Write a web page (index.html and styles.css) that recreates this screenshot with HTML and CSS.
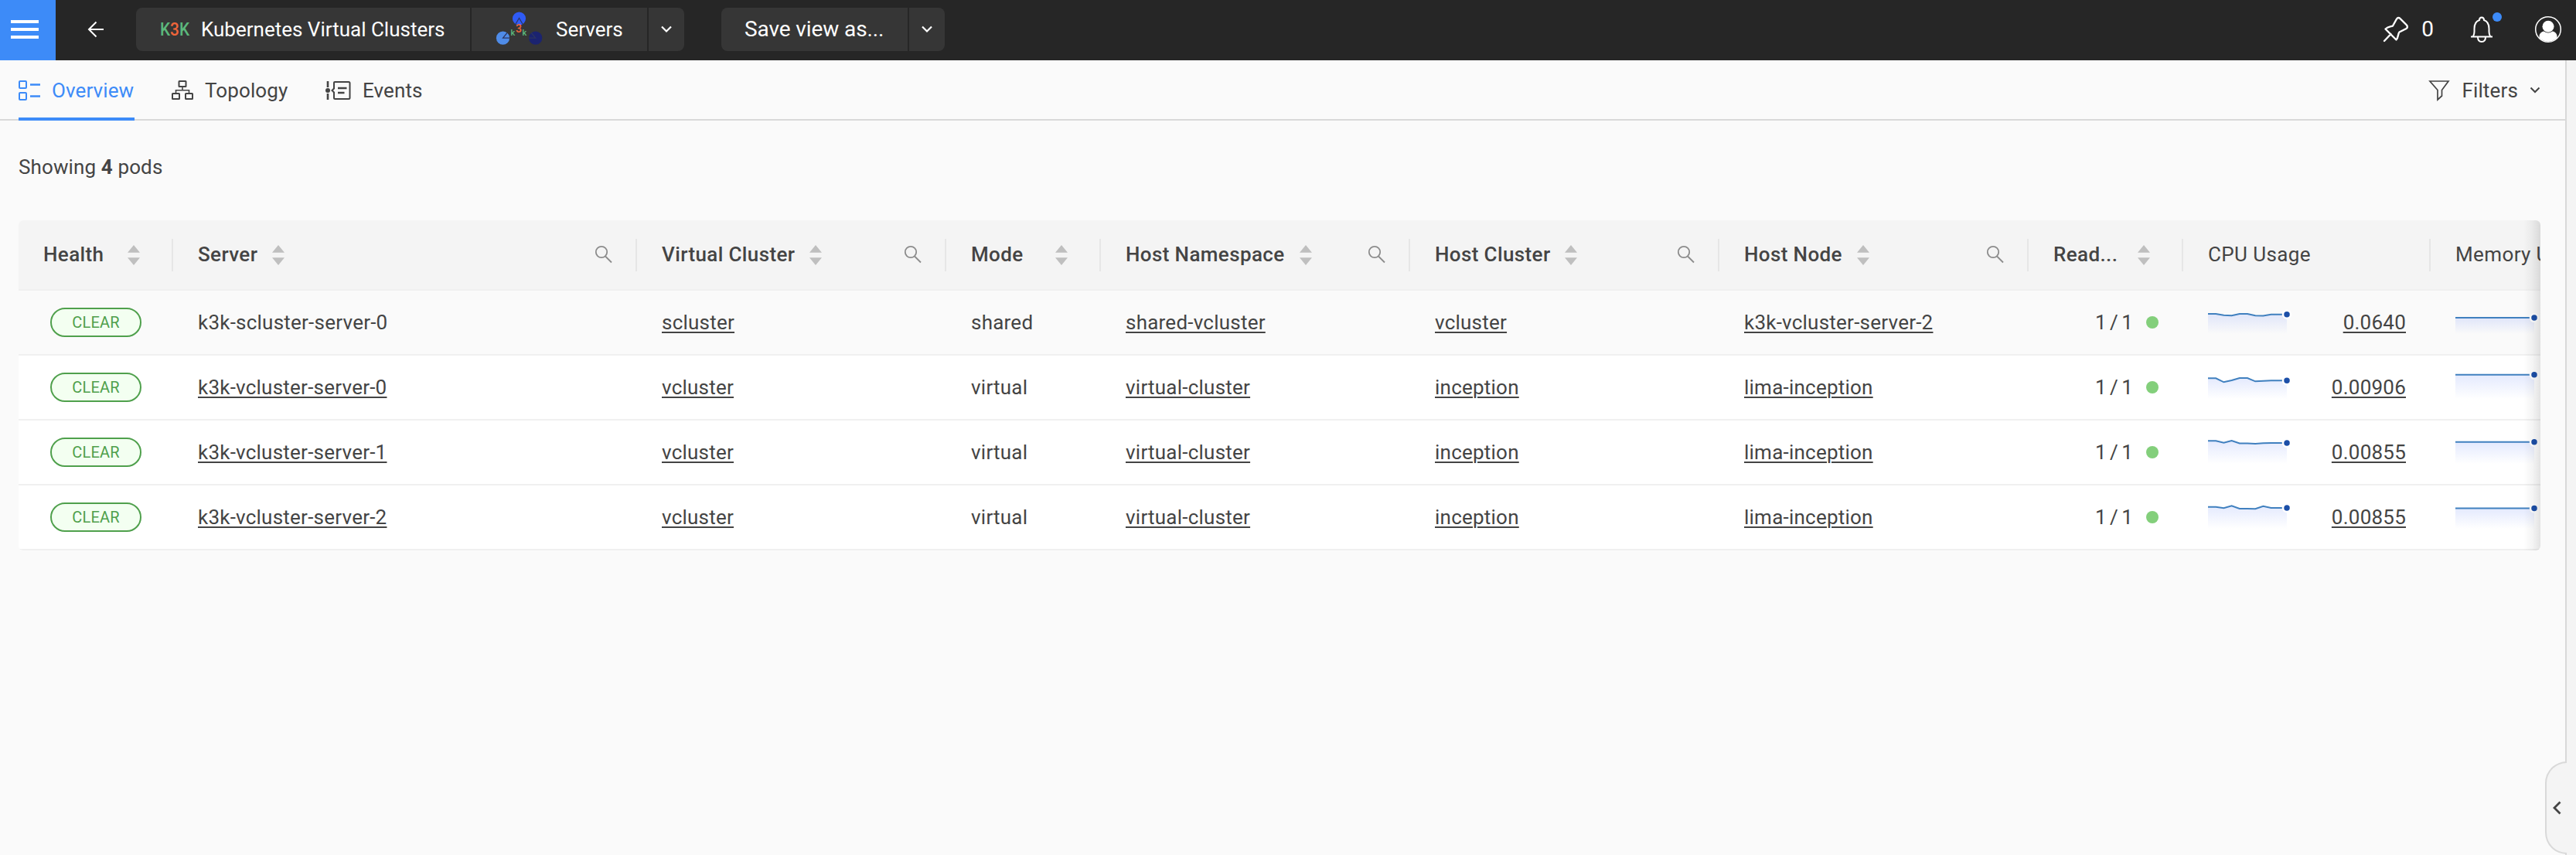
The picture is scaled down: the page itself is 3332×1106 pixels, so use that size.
FILE: index.html
```html
<!DOCTYPE html>
<html lang="en">
<head>
<meta charset="utf-8">
<title>Servers</title>
<link rel="stylesheet" href="styles.css">
</head>
<body>
<header class="topbar">
  <button class="menu" aria-label="Menu"><i></i><i></i><i></i></button>
  <button class="back" aria-label="Back"><svg width="24" height="24" viewBox="0 0 24 24" fill="none" stroke="#fff" stroke-width="2"><path d="M22 12H3M12.5 2.500L3 12l9.500 9.500"/></svg></button>
  <nav class="group crumbs">
    <a class="seg seg-root"><svg class="k3k" width="38" height="24" viewBox="0 0 38 24"><text x="-1" y="20" textLength="38" lengthAdjust="spacingAndGlyphs"><tspan fill="#5cb87c">K</tspan><tspan fill="#f0653a">3</tspan><tspan fill="#5cb87c">K</tspan></text></svg><span>Kubernetes Virtual Clusters</span></a>
    <a class="seg seg-servers"><svg width="60" height="48" viewBox="0 0 60 48"><circle cx="29.500" cy="10" r="8.600" fill="#2f5bf5"/><circle cx="8.500" cy="35.200" r="8.600" fill="#4f8ce8"/><circle cx="50.700" cy="35.200" r="8.600" fill="#1b2370"/><g fill="none" stroke="#2c3560" stroke-width="1.200"><path d="M25 17l4.500-7.500 4.500 7.500M14 28.500l-5.500 6.700h8.600M45.200 28.500l5.500 6.700h-8.600"/></g><g class="mini"><text x="18.500" y="31.500" fill="#5cb87c">k</text><text x="25" y="27.500" fill="#f0653a" class="mini-3">3</text><text x="33.500" y="31.500" fill="#5cb87c">k</text></g></svg><span>Servers</span></a>
    <button class="seg seg-drop" aria-label="Choose view"><svg width="14" height="10" viewBox="0 0 14 10"><path d="M1 1.500l6 6 6-6" fill="none" stroke="#fff" stroke-width="2.200"/></svg></button>
  </nav>
  <div class="group save">
    <button class="seg seg-save">Save view as...</button>
    <button class="seg seg-drop" aria-label="Save options"><svg width="14" height="10" viewBox="0 0 14 10"><path d="M1 1.500l6 6 6-6" fill="none" stroke="#fff" stroke-width="2.200"/></svg></button>
  </div>
  <div class="tools">
    <svg class="pin" width="34" height="34" viewBox="0 0 34 34" fill="none" stroke="#fff" stroke-width="2.400" stroke-linejoin="round" stroke-linecap="round"><path d="M2 32L10.500 23M3.500 16.500C7 13 11 13.500 13 12.500L18 3.500C19 1.500 21 1.500 22.500 3L31 11.500C32.500 13.500 32 15 30.500 16L21.500 20.500C19.500 22.500 20.500 27.500 17.500 30.500Z"/></svg>
    <span class="count">0</span>
    <span class="bell"><svg width="32" height="36" viewBox="0 0 32 36" fill="none" stroke="#fff" stroke-width="2"><path d="M2 27.500h28M5 27c1-2 1.500-3 1.500-6v-4C6.500 10 10 7 13 6c0-2 1-3.500 3-3.500s3 1.500 3 3.500c3 1 6.500 4 6.500 11v4c0 3 .5 4 1.500 6M11 28c0 4 2 6 5 6s5-2 5-6"/></svg><i class="dot"></i></span>
    <svg class="avatar" width="36" height="36" viewBox="0 0 36 36"><circle cx="18" cy="18" r="16.300" fill="none" stroke="#fff" stroke-width="1.500"/><circle cx="18" cy="14.300" r="7.500" fill="#fff"/><path d="M6.500 29v-2c0-3 2.500-6 6-6.500 3 2.500 8 2.500 11 0 3.500.5 6 3.500 6 6.500v2a16.500 16.500 0 0 1-23 0z" fill="#fff"/></svg>
  </div>
</header>
<div class="body">
  <main class="main">
    <div class="tabs">
      <a class="tab active"><svg width="28" height="26" viewBox="0 0 28 26" fill="none" stroke="currentColor" stroke-width="2"><rect x="1" y="1" width="9" height="9" rx="1"/><rect x="1" y="16" width="9" height="9" rx="1"/><path d="M15 5.500h13M15 20.500h13" stroke-width="2.500"/></svg><span>Overview</span></a>
      <a class="tab tab-topology"><svg width="28" height="26" viewBox="0 0 28 26" fill="none" stroke="currentColor" stroke-width="2"><rect x="9.500" y="1" width="9" height="7" rx=".5"/><rect x="1" y="17" width="9" height="7" rx=".5"/><rect x="18" y="17" width="9" height="7" rx=".5"/><path d="M14 8v4.500M5.500 17v-4.300h17V17" stroke-width="1.600"/></svg><span>Topology</span></a>
      <a class="tab tab-events"><svg width="33" height="26" viewBox="0 0 33 26" fill="none" stroke="currentColor" stroke-width="2"><path d="M3 1v8M3 17v8" stroke-width="2.600"/><circle cx="3" cy="13" r="3" fill="currentColor" stroke="none"/><path d="M8.500 13l2.500-2.500V3Q11 2 12 2H30q1.500 0 1.500 1.500V22.500q0 1.500-1.500 1.500H12.500q-1.500 0-1.500-1.500v-7z"/><path d="M16 10h11.500M16 16h8.500" stroke-width="2.400"/></svg><span>Events</span></a>
      <button class="filters"><svg width="28" height="28" viewBox="0 0 28 28" fill="none" stroke="currentColor" stroke-width="1.700"><path d="M2 2h24L17.500 13.500v7.500l-5.500 5V13.500z"/></svg><span>Filters</span><svg width="14" height="10" viewBox="0 0 14 10"><path d="M1.500 1.500L7 7l5.500-5.500" fill="none" stroke="currentColor" stroke-width="2"/></svg></button>
    </div>
    <p class="summary">Showing <b>4</b> pods</p>
    <div class="table" id="table"></div>
  </main>
  <aside class="drawer"><button class="handle" aria-label="Open panel"><svg width="12" height="18" viewBox="0 0 12 18"><path d="M10.500 1.500L3 9l7.500 7.500" fill="none" stroke="#444" stroke-width="2.800"/></svg></button></aside>
</div>
<script src="table.js"></script>
</body>
</html>
```
FILE: table.js
```js
const columns = [
  { label: 'Health', sort: true, spread: true },
  { label: 'Server', sort: true, search: true },
  { label: 'Virtual Cluster', sort: true, search: true },
  { label: 'Mode', sort: true, spread: true },
  { label: 'Host Namespace', sort: true, search: true },
  { label: 'Host Cluster', sort: true, search: true },
  { label: 'Host Node', sort: true, search: true },
  { label: 'Read...', sort: true, spread: true },
  { label: 'CPU Usage' },
  { label: 'Memory Usage' }
];

const rows = [
  { server: 'k3k-scluster-server-0', plain: true, vc: 'scluster', mode: 'shared', ns: 'shared-vcluster', cluster: 'vcluster', node: 'k3k-vcluster-server-2', cpu: '0.0640',
    cpuLine: [10, 10, 11.7, 12.3, 10, 10, 12.3, 12.6, 10.7, 10.7, 10.7], memory: 15 },
  { server: 'k3k-vcluster-server-0', vc: 'vcluster', mode: 'virtual', ns: 'virtual-cluster', cluster: 'inception', node: 'lima-inception', cpu: '0.00906',
    cpuLine: [9.3, 9.3, 14.3, 12, 9, 9, 13.3, 12.7, 12.3, 12.3, 12.3], memory: 4.8 },
  { server: 'k3k-vcluster-server-1', vc: 'vcluster', mode: 'virtual', ns: 'virtual-cluster', cluster: 'inception', node: 'lima-inception', cpu: '0.00855',
    cpuLine: [6.3, 6.3, 8.7, 6, 9.5, 9.5, 10, 9.3, 9, 9, 9], memory: 7.8 },
  { server: 'k3k-vcluster-server-2', vc: 'vcluster', mode: 'virtual', ns: 'virtual-cluster', cluster: 'inception', node: 'lima-inception', cpu: '0.00855',
    cpuLine: [7.7, 7.7, 9.3, 6.3, 10, 10, 10.3, 6.7, 9, 9, 9], memory: 9.5 }
];

const sortIcon = '<svg class="sort" width="16" height="26" viewBox="0 0 16 26" fill="#bfbfbf"><path d="M8 0l8 9.800H0zM8 26L0 16.200h16z"/></svg>';
const searchIcon = '<svg class="search" width="24" height="24" viewBox="0 0 24 24" fill="none" stroke="#8c8c8c" stroke-width="1.800"><circle cx="9" cy="9" r="7.200"/><path d="M14 14.500l8 8"/></svg>';

function spark(values) {
  const points = values.map((y, i) => `${(i * 102 / (values.length - 1)).toFixed(1)},${y}`).join(' ');
  const end = values[values.length - 1];
  return `<svg class="spark" width="110" height="42" viewBox="0 0 110 42"><defs><linearGradient id="fade" x1="0" y1="0" x2="0" y2="1"><stop offset="0" stop-color="#2f5bf5" stop-opacity=".13"/><stop offset="1" stop-color="#2f5bf5" stop-opacity="0"/></linearGradient></defs><polygon points="${points} 102,36 0,36" fill="url(#fade)"/><polyline points="${points}" fill="none" stroke="#4080bf" stroke-width="2"/><circle cx="102" cy="${end}" r="5" fill="#1c4fa8" stroke="#fff" stroke-width="2.500"/></svg>`;
}

const link = text => `<a class="link">${text}</a>`;
const cell = (content, name = '') => `<div class="cell ${name}">${content}</div>`;

const head = columns.map(c => `<div class="th ${c.sort ? 'sortable' : ''}"><span class="label ${c.spread ? 'spread' : ''}">${c.label}</span>${c.sort ? sortIcon : ''}${c.search ? searchIcon : ''}</div>`).join('');
const body = rows.map(r => `<div class="row">${[
  cell('<span class="pill">CLEAR</span>', 'health'),
  cell(r.plain ? r.server : link(r.server)),
  cell(link(r.vc)), cell(r.mode), cell(link(r.ns)), cell(link(r.cluster)), cell(link(r.node)),
  cell('<span>1 / 1</span><i class="ready"></i>', 'end'),
  cell(spark(r.cpuLine) + link(r.cpu), 'metric'),
  cell(spark([r.memory, r.memory]), 'metric')
].join('')}</div>`).join('');

document.getElementById('table').innerHTML = `<div class="row head">${head}</div>${body}`;
```
FILE: styles.css
```css
* { box-sizing: border-box; }
body {
  margin: 0;
  height: 1106px;
  display: flex;
  flex-direction: column;
  overflow: hidden;
  background: #fafafa;
  color: #444;
  font: 26px/36px Roboto, "Liberation Sans", sans-serif;
}
button { border: 0; padding: 0; background: none; color: inherit; font: inherit; }
svg { display: block; flex: none; overflow: visible; }

.topbar { height: 78px; flex: none; display: flex; align-items: center; background: #262626; color: #fff; padding-bottom: 2px; }
.menu { width: 72px; height: 78px; margin-bottom: -2px; padding-left: 14px; background: #3d8bf8; display: flex; flex-direction: column; justify-content: center; gap: 6px; padding-bottom: 2px; }
.menu i { width: 36px; height: 4px; background: #fff; }
.back { width: 104px; display: flex; justify-content: center; }
.group { display: flex; gap: 2px; height: 56px; border-radius: 8px; overflow: hidden; }
.seg { display: flex; align-items: center; background: #363636; }
.seg-root { width: 432px; padding-left: 32px; gap: 14px; }
.k3k { font: 500 24px Roboto, sans-serif; }
.seg-servers { width: 227px; padding-left: 32px; gap: 17px; }
.mini { font: 500 11px Roboto, sans-serif; }
.mini-3 { font-size: 14px; }
.seg-drop { width: 46px; justify-content: center; }
.save { margin-left: 48px; }
.seg-save { width: 241px; padding-left: 30px; font-size: 28px; letter-spacing: -.1px; }
.tools { display: flex; align-items: center; margin-left: auto; padding-right: 18px; }
.pin { margin-right: 17px; }
.count { margin-right: 46px; font-size: 28px; margin-left: -1px; }
.bell { position: relative; margin-right: 52px; }
.dot { position: absolute; left: 30px; top: -4px; width: 12px; height: 12px; border-radius: 50%; background: #3d8bf8; }

.body { flex: 1; display: flex; min-height: 0; }
.main { width: 3318px; flex: none; display: flex; flex-direction: column; }
.tabs { height: 78px; border-bottom: 2px solid #d9d9d9; display: flex; padding: 0 32px 0 24px; }
.tab { height: 78px; display: flex; align-items: center; gap: 15px; padding-top: 3px; border-bottom: 4px solid transparent; margin-right: 48px; letter-spacing: .1px; }
.tab.active { width: 150px; color: #3d8bf8; border-color: #3d8bf8; }
.tab-topology { width: 151px; }
.filters { display: flex; align-items: center; gap: 15px; margin-left: auto; padding-top: 1px; letter-spacing: .15px; }
.summary { margin: 42px 0 51px 24px; letter-spacing: .12px; }
.summary b { font-weight: 700; }

.table { position: relative; width: 3262px; margin-left: 24px; border-radius: 6px; overflow: hidden; background: #fff; letter-spacing: .23px; }
.table::after { content: ""; position: absolute; inset: 0 0 0 auto; width: 22px; background: linear-gradient(to left, rgba(0, 0, 0, .11), rgba(0, 0, 0, .04) 50%, transparent); }
.row { width: 3462px; height: 84px; display: grid; grid-template-columns: 200px 600px 400px 200px 400px 400px 400px 200px 320px 320px; align-items: center; border-bottom: 2px solid #f0f0f0; }
.row:nth-child(2) { background: #fafafa; }
.head { height: 91px; background: #f4f4f4; letter-spacing: .38px; }
.th { height: 42px; display: flex; align-items: center; padding-left: 32px; border-right: 2px solid #e6e6e6; }
.th.sortable { font-weight: 500; }
.label { padding-bottom: 2px; }
.sort { margin-left: 19px; }
.label.spread { flex: 1; }
.spread + .sort { margin-right: 41px; }
.search { margin-left: auto; margin-right: 29px; margin-bottom: 1px; }
.cell { padding: 0 32px; display: flex; align-items: center; }
.health { padding-left: 41px; }
.pill { width: 118px; height: 38px; border: 2px solid #4fa04c; border-radius: 19px; background: #f3fff1; color: #4fa04c; font-size: 20px; line-height: 34px; text-align: center; letter-spacing: .2px; }
.link { text-decoration: underline; text-decoration-thickness: 2px; text-underline-offset: 3px; }
.end { justify-content: flex-end; gap: 17px; word-spacing: -2.5px; }
.ready { width: 16px; height: 16px; border-radius: 50%; background: #83cf7b; }
.metric { justify-content: space-between; }

.drawer { position: relative; flex: 1; background: #f4f4f4; border-left: 2px solid #d9d9d9; }
.handle { position: absolute; left: -28px; top: 907px; width: 28px; height: 120px; border: 2px solid #d9d9d9; border-right: 0; border-radius: 28px 0 0 28px; background: #f4f4f4; display: flex; align-items: center; padding-left: 7px; }
```
